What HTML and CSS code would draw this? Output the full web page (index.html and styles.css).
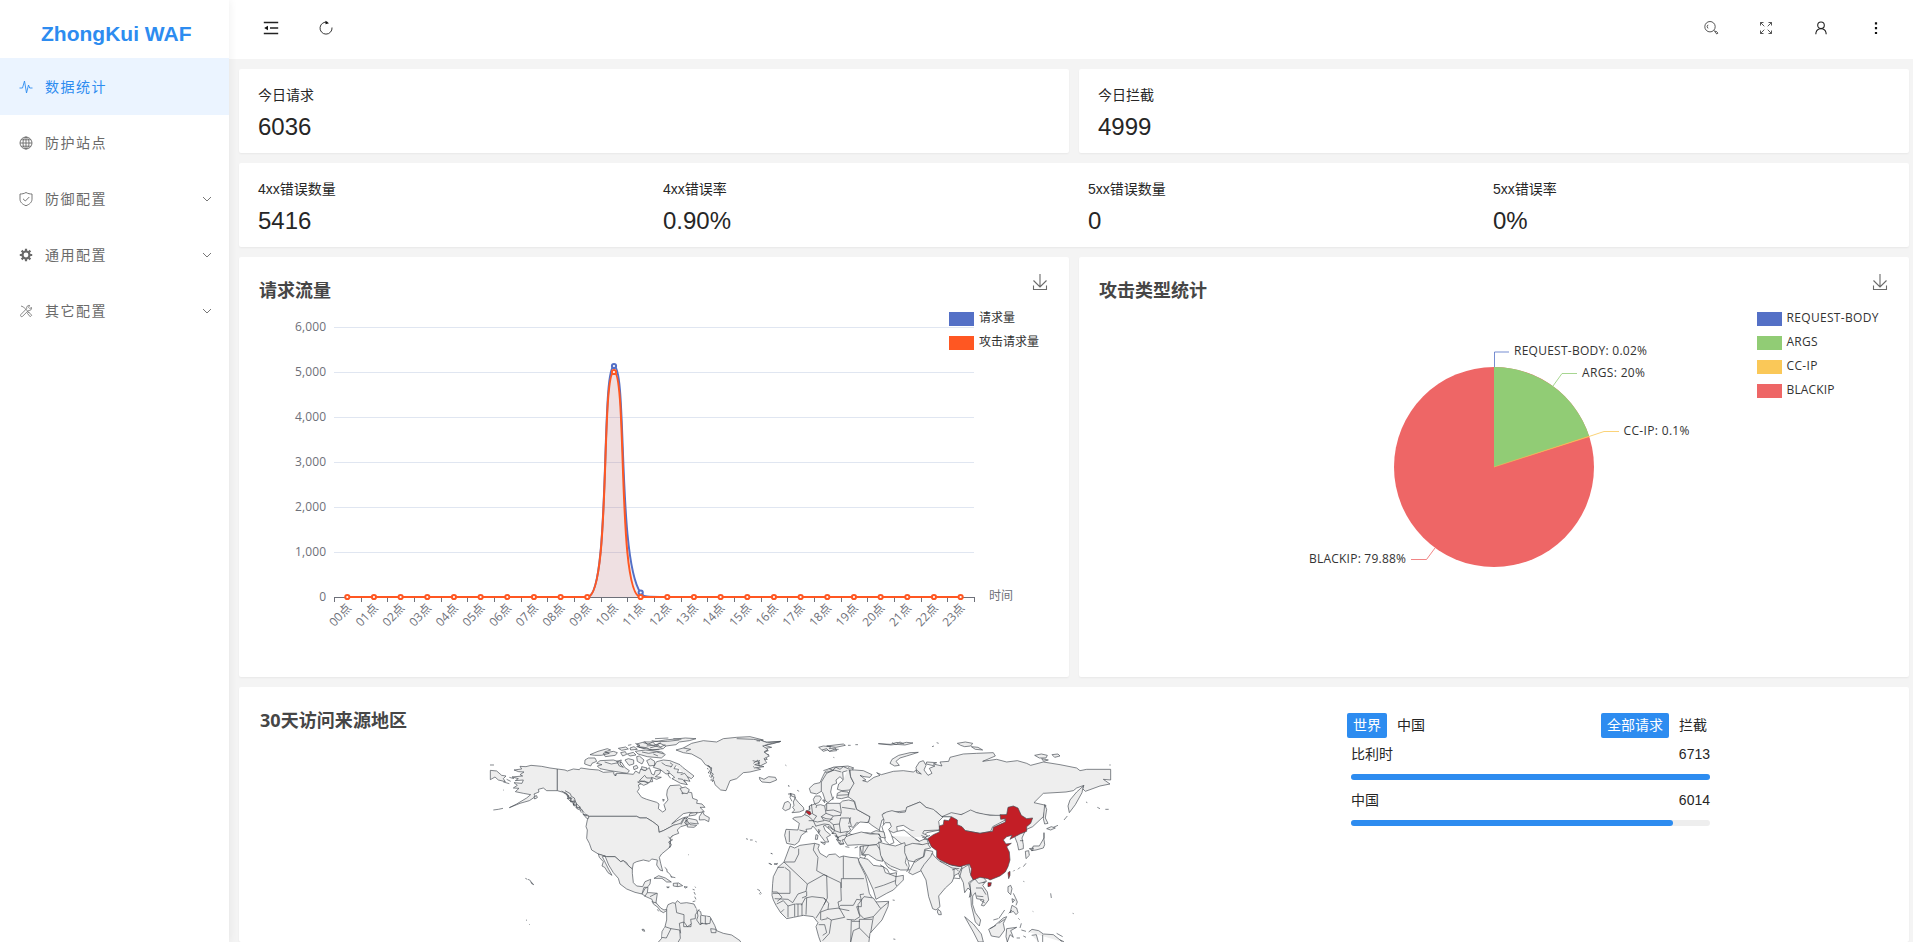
FILE: index.html
```html
<!DOCTYPE html>
<html lang="zh-CN">
<head>
<meta charset="utf-8">
<title>ZhongKui WAF</title>
<link rel="stylesheet" href="styles.css">
</head>
<body>
<div class="app">
  <aside class="sidebar">
    <div class="logo">ZhongKui WAF</div>
    <nav class="menu">
      <a class="menu-item active"><svg class="mi" viewBox="0 0 14 14"><path d="M0.5 8h3L5.500 1l2 12 2-8 1.200 3h2.800"/></svg><span>数据统计</span></a>
      <a class="menu-item"><svg class="mi" viewBox="0 0 14 14"><circle cx="7" cy="7" r="6"/><ellipse cx="7" cy="7" rx="3" ry="6"/><path d="M7 1v12M1 7h12M2 3.800h10M2 10.200h10"/></svg><span>防护站点</span></a>
      <a class="menu-item"><svg class="mi" viewBox="0 0 14 14"><path d="M7 .5c2 1.200 4 1.500 6 1.500v5.200c0 3-2.500 5.200-6 6.500C3.500 12.400 1 10.200 1 7.200V2c2 0 4-.3 6-1.500zM4 6.800l2.300 2.200 4-4"/></svg><span>防御配置</span><svg class="arrow" viewBox="0 0 10 6"><path d="M1 1l4 4 4-4"/></svg></a>
      <a class="menu-item"><svg class="mi gear" viewBox="0 0 14 14"><circle cx="7" cy="7" r="3.500"/><path d="M7 .8v2.400M7 10.800v2.400M.8 7h2.400M10.800 7h2.400M2.600 2.600l1.700 1.700M9.700 9.700l1.700 1.700M11.400 2.600L9.700 4.300M4.300 9.700l-1.700 1.700"/></svg><span>通用配置</span><svg class="arrow" viewBox="0 0 10 6"><path d="M1 1l4 4 4-4"/></svg></a>
      <a class="menu-item"><svg class="mi tools" viewBox="0 0 14 14"><path d="M2 2l2.500 1L10 8.500M8.500 9.500l1-1.500 3.200 3.200-1.500 1.500zM12.500 3.500L10.700 4.500 9.600 3.300l1-1.900c-2-.2-3.400 1.300-2.900 3.200L2 10.400c-1.300 1.300.3 3.200 1.700 1.800L9.400 6.500c2 .4 3.500-1 3.100-3z"/></svg><span>其它配置</span><svg class="arrow" viewBox="0 0 10 6"><path d="M1 1l4 4 4-4"/></svg></a>
    </nav>
  </aside>

  <div class="page">
    <header class="topbar">
      <div class="tools-left">
        <svg class="hi" viewBox="0 0 16 16"><path class="thick" d="M.8 2.500h14.400M7 8h8.200M.8 13.500h14.400"/><path class="solid" d="M1.200 8L5 5.800v4.400z"/></svg>
        <svg class="hi" viewBox="0 0 16 16"><path class="fine" d="M9.500 2.300A6 6 0 1 0 14 7.500"/><path class="solid" d="M7.500 .8L11 3.200 7.500 4.200z"/></svg>
      </div>
      <div class="tools-right">
        <svg class="hi thin" viewBox="0 0 16 16"><circle cx="7" cy="6.700" r="5.200"/><path d="M5 4.800a2.600 2.600 0 0 0 0 3.600M10.800 10.500l1.600 1.200M11.800 12l1-1 2.200 2.100-1 1z"/></svg>
        <svg class="hi thin" viewBox="0 0 16 16"><path d="M2.500 5.500v-3h3M2.500 2.500l3.800 3.800M10.500 2.500h3v3M13.500 2.500L9.700 6.300M2.500 10.500v3h3M2.500 13.500l3.800-3.800M10.500 13.500h3v-3M13.500 13.500L9.700 9.700"/></svg>
        <svg class="hi" viewBox="0 0 16 16"><circle cx="8" cy="5.300" r="3.300"/><path d="M2.800 14.300c0-3 1.700-5 4-5.600h2.400c2.300.6 4 2.600 4 5.600"/></svg>
        <svg class="hi" viewBox="0 0 16 16"><path class="solid" d="M6.900 2.300h2.200v2.200H6.900zM6.900 7.100h2.200v2.200H6.900zM6.900 11.900h2.200v2.200H6.900z"/></svg>
      </div>
    </header>

    <main class="content">
      <div class="row two">
        <section class="card stats"><div class="stat"><p>今日请求</p><b>6036</b></div></section>
        <section class="card stats"><div class="stat"><p>今日拦截</p><b>4999</b></div></section>
      </div>
      <section class="card stats four">
        <div class="stat"><p>4xx错误数量</p><b>5416</b></div>
        <div class="stat"><p>4xx错误率</p><b>0.90%</b></div>
        <div class="stat"><p>5xx错误数量</p><b>0</b></div>
        <div class="stat"><p>5xx错误率</p><b>0%</b></div>
      </section>

      <div class="row two">
        <section class="card chart">
          <svg class="canvas" id="flow" viewBox="239 257 830 420" width="830" height="420">
            <text class="title" x="259" y="297">请求流量</text>
            <path class="save" d="M1040 274v13M1033.500 280.500l6.500 6.500 6.500-6.500M1033.500 285.500v4h13v-4"/>
            <g class="grid"><path d="M334 327.500h640M334 372.500h640M334 417.500h640M334 462.500h640M334 507.500h640M334 552.500h640"/></g>
            <g class="ylab"><text x="326" y="330.500" textLength="31">6,000</text><text x="326" y="375.500" textLength="31">5,000</text><text x="326" y="420.500" textLength="31">4,000</text><text x="326" y="465.500" textLength="31">3,000</text><text x="326" y="510.500" textLength="31">2,000</text><text x="326" y="555.500" textLength="31">1,000</text><text x="326" y="600.500">0</text></g>
            <g id="axis"></g>
            <text class="axname" x="989" y="600">时间</text>
            <path class="area-b" d="M587.300 597C611 597 600.700 366 614 366C627.300 366 617 559 640.700 593C643.500 597 646 597 667.300 597z"/>
            <path class="area-o" d="M587.300 597C611 597 600.700 372 614 372C627.300 372 617 597 640.700 597z"/>
            <path class="line-b" d="M347.300 597H587.300C611 597 600.700 366 614 366C627.300 366 617 559 640.700 593C643.500 597 646 597 667.300 597H960.700"/>
            <g class="dot-b"><circle cx="614" cy="366" r="2.100"/><circle cx="640.700" cy="592.500" r="2.100"/></g>
            <path class="line-o" d="M347.300 597H587.300C611 597 600.700 372 614 372C627.300 372 617 597 640.700 597H960.700"/>
            <g class="dot-o" id="dots"></g>
            <rect x="949" y="312" width="25" height="14" fill="#5470c6"/><text class="leg" x="979" y="322">请求量</text>
            <rect x="949" y="336" width="25" height="14" fill="#ff5722"/><text class="leg" x="979" y="346">攻击请求量</text>
          </svg>
        </section>
        <section class="card chart">
          <svg class="canvas" viewBox="1079 257 830 420" width="830" height="420">
            <text class="title" x="1099" y="297">攻击类型统计</text>
            <path class="save" d="M1880 274v13M1873.500 280.500l6.500 6.500 6.500-6.500M1873.500 285.500v4h13v-4"/>
            <circle cx="1494" cy="467" r="100" fill="#ee6666"/>
            <path d="M1494 467V367A100 100 0 0 1 1589.100 436.100z" fill="#91cc75"/>
            <path d="M1494 467L1589.100 436.100 1589.300 436.700z" fill="#fac858" stroke="#fac858" stroke-width=".3"/>
            <g class="guide">
              <path stroke="#5470c6" d="M1494.500 367V352H1509"/><path stroke="#91cc75" d="M1553 386L1562 373.500H1577"/><path stroke="#fac858" d="M1589 436.500L1604 431.500H1619"/><path stroke="#ee6666" d="M1435 548L1426.500 559.500H1411"/>
            </g>
            <g class="leg">
              <text x="1514" y="355" textLength="133">REQUEST-BODY: 0.02%</text><text x="1582" y="377" textLength="63">ARGS: 20%</text><text x="1623.500" y="435" textLength="66">CC-IP: 0.1%</text><text x="1309" y="563" textLength="97">BLACKIP: 79.88%</text>
              <rect x="1757" y="312" width="25" height="14" fill="#5470c6"/><text x="1786.500" y="322" textLength="92">REQUEST-BODY</text>
              <rect x="1757" y="336" width="25" height="14" fill="#91cc75"/><text x="1786.500" y="346" textLength="31">ARGS</text>
              <rect x="1757" y="360" width="25" height="14" fill="#fac858"/><text x="1786.500" y="370" textLength="31">CC-IP</text>
              <rect x="1757" y="384" width="25" height="14" fill="#ee6666"/><text x="1786.500" y="394" textLength="48">BLACKIP</text>
            </g>
          </svg>
        </section>
      </div>

      <section class="card region">
        <svg class="map" viewBox="239 687 1108 255" width="1108" height="255">
          <text class="title" x="260" y="726.500" textLength="147">30天访问来源地区</text>
          <!-- western hemisphere -->
          <g class="land" transform="translate(470 720) scale(.33333)">
            <path d="M262 147L240 144 215 139 183 136 168 140 150 139 155 147 132 150 146 155 162 156 150 164 158 168 126 171 145 176 136 182 160 180 156 190 132 188 142 196 130 204 147 205 136 215 160 220 182 224 170 234 140 252 118 263 150 250 178 242 196 230 192 222 207 216 205 208 220 204 230 212 262 212z"/>
            <path d="M61 151L80 153 95 166 108 168 100 176 106 185 85 180 75 171 61 179zM60 135h12M110 178l12 6M118 172l14 4M100 186l18 5M70 270l15-2M85 268l14-3M100 210l2 1M192 230l8-3 2 6-8 4z"/>
            <path d="M262 147L285 150 292 153 310 147 328 149 332 144 360 148 385 150 400 157 430 155 437 168 440 160 470 161 490 163 497 153 508 160 512 147 525 152 538 143 545 162 552 165 556 152 572 150 570 160 556 170 574 172 560 178 545 172 548 185 525 186 505 195 508 205 502 215 515 232 530 238 560 247 567 252 565 266 578 276 587 270 582 254 594 240 590 225 592 210 600 197 628 195 640 206 636 222 650 215 665 218 668 235 682 240 680 250 696 252 705 262 690 262 703 275 675 280 660 277 640 281 620 298 605 312 618 304 640 293 655 290 645 300 632 318 612 315 580 332 567 337 565 318 548 305 530 294 510 294 500 289H358L345 282 335 268 322 262 318 248 308 236 296 228 290 220 262 212z"/>
            <path d="M275 213l14 8 4 9 10 4-2 8 12 4-3 9 10 3 2 9 9 3 3 8M285 212l16 9 3 8 9 5 5 15 7 8 8 6M292 234l8 9 8 4 5 12M280 218l12 6 6 12M296 226l-4 10 12-2-2 12 12-4-4 12 10-2-2 12 12-2M340 283l14 3 6 12-10-3zM328 262l10 12 2 10 12 4"/>
            <path d="M503 186l20-3 12 7-14 6zM508 182l16-16 6 8 16 0-8 14zM630 205l16-4 12 8-6 12-14-2zM578 238l5 1-3 5z"/>
            <path d="M358 289H500L510 294 530 294 548 305 565 318 567 337 580 332 610 316 632 310 640 296 650 294 645 308 650 315 632 320 622 330 626 340 612 345 603 352 607 360 596 366 602 376 597 384 575 402 568 412 572 430 578 453 570 450 560 435 562 420 545 417 538 424 520 420 500 425 490 430 487 447 475 437 470 428 460 422 452 425 435 410 410 410 385 402 365 390 358 370 350 355 352 330 348 320 352 300z"/>
            <path d="M595 350l8 8-4 8 5 8-5 9 3-20M608 346l-8 10 6 6M655 295l25 5 5 12-25-3-8 6-8-6zM650 300l10 14 20 2-8 6-20-1zM688 290l10-15 5 10 15 8-2 12-12-6-16 1zM660 280l22-3-5 8-20 3zM645 292l-12 22"/>
            <path d="M385 402L410 410 435 410 452 425 460 422 475 437 487 447 487 460 490 488 500 498 518 500 525 485 542 478 540 492 532 502 522 502 516 522 495 517 470 507 450 492 445 475 430 458 416 435 405 408 397 410 408 432 416 448 426 466 414 458 404 442 396 438 400 425 388 412z"/>
            <path d="M516 522l10-18 8-2-2 16 8 0 22 2-4 28 14 16 10 6 16-4 4 8-12-2-10 6-10-6-6-10-14-10-4-14-18-8zM532 518l-8 12M540 530l20-10M545 545l15 4M562 568l4 6"/>
            <path d="M552 475l14-8 20 7 18 12-14 0-14-11zM610 490l16-1 12 8-14 3-14-2zM622 490v9M590 501l8 0-4 3zM642 500l10 1-6 3zM584 442l6 5 2 10M592 455l8 8 6 10M602 470l14 3M668 508l6 2M672 516l4 8M674 530l4 8M668 545l8-2M675 500l2 3"/>
            <path d="M590 565L594 554 608 548 616 550 622 542 632 550 650 548 672 552 680 568 692 575 694 586 720 590 734 616 740 632 760 640 785 645 810 662 815 672H560L575 655 576 635 585 620 590 600z"/>
            <path d="M616 550l4 28 22 6 0 22 10 14 12-8-2-14 14-2 0-12 12-16M680 568l4 20-4 12 10 14 6-6M692 586l0 24 20 2M706 588l0 24 14-2 2-16M585 620l18 6-14 28-14-2M603 626l26 4 2 25-10 17M663 612l0 8-22 0 0-14-13 4 4 30M690 614l8-4M722 626l16 2 0 10-14 0z"/>
            <path d="M345 120l10-6 20 0 5 10-14 6-4 8-18-6zM380 130l10-8 40-2 26 8 8 14 14 10-6 8-26-4-26-4-30-6-8-8 14-4zM360 104l24-10 28-8 10 4-18 6 14 4-24 6-20 0zM400 100l30-6 12 4-6 8-30 4zM440 124l14-4-4 12 10 10-12-4zM445 85l22-4 8 6-20 4zM465 120l10-4 16 4 0 12-14 4zM480 84l12-4 10 8-20 2zM496 94l30-4 50 6 10 8-12 10-42-4-28-8zM500 110l8-2 14 12-6 12-14-8zM472 102l18-5 8 8-18 3zM490 140l10-4 4 8-12 5zM452 98l14-3 4 8-12 5zM474 76l10-2M430 160l6 8 2-8M404 126l20 6 22-4"/>
            <path d="M500 72l22-6 24 0 40-6 60-6 32 2-20 6-30 4-10 8-30 4-8 8-32 4-40-8zM520 68l30 8 20-6 18 8M530 78l20-2 20 6 16-8M505 80l25 3 10 6 28 0M545 62l20 3 28-1 35-4M540 84l26-8 10 10M555 56l40-2M610 56l24 2M496 70l14 6-10 4 24 6M524 64l8 10 16-8 10 10 14-8M516 96l20 4 24-4 22 6M550 102l14 6"/>
            <path d="M560 125l20-5 20 2 30 12 8 8 34 26-8 8-12-6 8 14-18-4 10 14-20-4-26-14 8-4-14-12-12 2-18-14-20-6zM530 122l12-6 12 8 0 12-16 2zM590 150l8 5-4 10 8 10M575 128l12 8 18 4M600 128l8 6-6 8M515 140l16 4-4 8-12-4zM618 136l-6 10 14 2-4 10 16 0M632 164l12-4 8 10M624 176l14 2 8 10"/>
            <path d="M618 90L640 84 665 70 700 62 740 66 760 56 800 52 840 50 880 60 860 62 890 66 933 64 905 72 885 76 905 82 880 86 895 92 876 98 896 104 882 108 892 118 868 122 884 130 850 140 872 148 840 156 820 158 800 176 780 182 768 212 752 210 735 194 732 182 722 180 730 172 718 168 728 162 714 158 724 152 712 146 720 140 706 134 694 118 665 102 640 98z"/>
            <path d="M848 122l26 6-20 6 28 6-30 4M875 84l14 8-8 12 12 6M715 136l10 14-4 12 10 10-4 14M800 56l50 2 30 4M640 84l22 4-14 6M850 130l14-10 4 18 10-8M712 138l14 6-8 10 12 8-8 12"/>
            <path d="M868 172l14 6 14-8 20 2 4 8-20 8-24-2-6-6zM946 135l3 2M984 212l2 2M955 197l3 1M828 356l6 2M840 360l8 0M856 364l4 2M902 400l4 1M898 430l6 3M912 432l10 2M862 508l8 4M868 520l3 4M655 404l2 1M166 475l6 3M174 478l8 4M182 484l9 10-6-3zM168 600l3 1M177 612l2 2M516 628l6 0 2 6-6-2z"/>
          </g>
          <!-- eastern hemisphere -->
          <g class="land" transform="translate(760 720) scale(.33333)">
            <path d="M0 60L22 68 60 65 28 72 8 78 24 88 12 96 28 108 12 116 20 128 0 138M84 197l4 2M112 211l4 2"/>
            <path d="M176 82l14-4 22 2-4 6 18-2 4 8-20 2-8-4-12 4zM200 78l50-6 6 4-28 6zM264 76l8 0M286 74l8 0M355 71l36 2 20-6 12 4 16-4 20 2-24 6-28-2-14 2zM220 112l3 1M516 80l6-2M530 68l6 2M186 90l14-4 8 8 14-6 14 0M396 68l12 6 12-8 12 6"/>
            <path d="M390 130L396 118 416 106 450 98 475 97 440 108 420 114 408 124 418 136 404 138zM592 70l24-4 22 4-6 8-18 2-12-4zM634 80l20 2 14 8-22-2zM824 106l20-4 18 4-4 8-20 0zM876 104l18-2 6 6-16 4zM845 116l20 4-14 4zM1048 135h4"/>
            <path d="M100 246l6-14-12-4-4-8 14 4 2 12 10 12 14 14 2 8-14 6-22 2 8-8-6-8 4-6zM68 266l6-18 10-4 8 8-2 14-14 6zM84 222l10 0-4 10 6 12"/>
            <path d="M104 292L124 290 134 284 138 274 150 268 148 258 164 252 170 256 182 254 194 258 200 250 240 250 248 243 266 240 282 244 290 268 322 286 330 290 326 306 306 312 290 308 280 322 266 318 272 330 258 340 262 356 246 360 252 372 240 374 230 358 236 350 222 342 208 328 202 314 190 318 196 332 212 345 200 352 206 366 196 366 184 350 166 326 158 318 154 326 138 328 140 334 124 346 116 366 104 375 80 370 74 346 78 328 114 330 118 310 98 296z"/>
            <path d="M88 332v34M118 330l24 6M154 252l4 30 12 6-10 14 8 18M134 284l10 4 14 12M148 258l0 10M170 256l-2 8M194 258l4 22 -14 10 8 12-20 4-14-4M198 280l22 8 22-2M200 250l0 20M240 250l4 28-4 10M246 262l40 6M220 288l-12 16 12 10 18-2 4-18 26 0 6 24M208 304l-16-4M220 314l4 18 18 6 22-4M192 312l16 2 12 16M238 312l4 26M204 318l20 14-8 10M224 346l10 6 14-6 12 0M215 340l12 0 10 22M168 318l24-6M272 292l-6 20M242 278l-22-8-22 2M184 290l14 6 20 2M160 302l-14 0M226 350l10 2-6 8 12 2-4 8 14 0M196 318l16 12 8 12"/>
            <path d="M148 205L162 192 180 188 188 170 196 154 220 142 250 140 280 146 276 152 262 152 248 156 250 180 240 170 228 180 230 190 216 196 212 216 218 236 204 248 196 242 188 218 184 214 170 222 152 218zM160 238l6-10 14 0 4 8-8 12-12 4zM188 240l6 0 0 8zM218 240l3-10"/>
            <path d="M184 214V186L200 160 222 150 244 156M190 152l30-10 44-4 18 6M196 158l26-8M206 146l12 4 10-8 12 6 10-8 14 6M250 180l-14 12-4 16 14 4 24-2 14-16-12-22-6-30M232 220l12-6 20 2 4 14-24 6-14-2zM232 226l36-2M266 218l6-8"/>
            <path d="M284 150L310 152 336 164 330 172 312 170 300 166 318 180 308 182 322 186 342 172 360 166 350 158 364 164 400 154 430 152 460 156 470 150 484 162 470 158 468 142 478 126 490 122 498 136 492 150 504 166 516 160 508 145 525 138 498 132 500 126 530 128 520 132 546 138 540 126 566 124 570 112 610 102 650 100 700 98 706 108 668 124 710 118 740 126 772 122 800 130 812 136 850 126 900 134 950 144 960 152 980 148 1052 148V180L1030 178 1050 192 1020 198 976 214 968 206 972 196 950 204 940 212 918 216 850 220 822 248 858 256 850 290 818 320 796 330 772 300 756 280 726 288 700 286 672 284 640 276 600 284 574 290 546 290 530 276 518 270 498 262 480 246 440 262 440 272 370 280 380 296 366 300 356 336 324 330 306 312 326 306 330 290 290 268 284 244 264 230 270 210 282 190 272 170 270 150z"/>
            <path d="M930 240l20-24 20-18-4 20-20 36-18 24-4-20zM854 254l6 14-4 26 8 16-10 2-4-16zM978 246l4 2M1012 262l8 4M1036 268l10 0M912 300l10-12M880 322l14-6"/>
            <path d="M366 284L380 276 396 272 418 278 436 276 440 262 480 246 498 262 520 268 548 292 536 304 538 318 540 330 500 338 488 352 470 336 452 330 430 316 410 320 412 334 400 338 384 330 370 312 372 300z"/>
            <path d="M546 290L574 278 604 284 632 270 650 278 690 286 724 286 736 300 698 320 692 334 660 340 616 332 590 320 572 290z"/>
            <path d="M412 334l20-4 22 18 24 16 14-6 10-12-14-6 4-8 48-2M488 352l12 4 6 16-16 4-12-4-18 2-22 8-18-14-16-14-10-6M478 364l-12-6M492 358l22 0M484 346l12 6 14-6"/>
            <path class="sea" d="M376 308l14 0 4 12-8 8 8 16 8 24-14 6-12-12-4-20-6-22z"/>
            <path class="sea" d="M284 320l16-14 26 2 10 8 24 16-10 10-30-4-34 6-22 0 10-12z"/>
            <path d="M258 350l16-6 30-8 26 6 28 0 6 22-16 10-20 2-30-2-36 2-10-16zM258 346l8-6 10 4M334 338l14-6 24 4 4 18-12-2-10-10M356 352l10 14"/>
            <path d="M300 380l10-2 40-4 12 18 6 32-18-4-24-16-20 0zM300 380v30M310 378l-2 24M318 406l-12 22M326 376l-16 26M304 404l14 4"/>
            <path d="M356 366l20 6 30 6 28-10 8 30-6 30 12 22-26 0-30-12-20-14-10-18z"/>
            <path d="M434 378l24-8 30 4 14-4 10 14-18 4-4 22-24 16-22-4-10-24zM440 456l8-18-4-14M466 420l26-10 4-20 22 4 0 22-14 20-16 14-30 14-12-6z"/>
            <path d="M482 450L492 434 512 410 516 400 530 416 540 424 576 436 606 440 600 458 584 466 576 486 556 504 536 528 540 560 528 570 518 566 506 530 498 480z"/>
            <path d="M540 424l36 20 22 2M582 446l0 24M606 442l-10 18 4 14M576 450l12-4 8 8M580 474l20 2M534 568l8 6 2 10-8 0-4-8z"/>
            <path d="M606 446l20-12 4 24 10 20-14 10 4 14 4 24-6 6 4-20-8-8-10 14-4-30-10-20zM630 490l14-14 12 14 20-4-8 10 14 20 4 24-14 18-8-2 8-16-22-4-4-18-8 10 0 26 8 24 16 22-4 18-12-12-12-50zM648 504l18 0 12 20M650 528l20 2M640 478l14-10 16 4 10 12-12 4M660 540l14 8"/>
            <path d="M614 590L640 612 664 642 670 666H655L640 636zM686 628l14-8 30-26 10-4-10 20 4 20-16 22-24-4zM690 626l18-10M716 610l18-12M740 626l30-4-18 10 8 20-10-8-8 22-4-16zM700 600l14-4M744 500l8-4 4 10-4 18-8-8zM756 536l8 4-6 8zM756 556l14 8 4 14-6 6-8-10-10 4zM734 570l-18 26M760 520l6 12 6 14-4 10M775 595l4 4M784 610l-4 14M784 630l14 4M806 636l10-8 20 4 14 10 30 2 28 22M815 646l14-2 6 22M848 644v22M746 580l10-10M790 648l8 4M770 654l10 0M890 640l18 10M900 660l12 5"/>
            <path d="M860 326l14-6 12 4-14 6zM852 338l0 20 2 16-4 10-22 6-14 2 6-14 18 0 14-24zM796 394l10-2 2 14-10 10zM808 386l12-2-2 8zM764 350l6-8 12-4 14-6-10 22 4 20 0 12-14 4-4-20-8-20zM780 362l10 0M798 430l-8 10M780 442l-6 6M764 450l-4 4M790 484l3 1M872 520l2 14M818 574l2 1M938 580l3 1M398 540l6 1M400 657l6 1M34 400l4 2M26 430l10 4M42 432l12-2M0 515l4 6"/>
            <path d="M294 420L300 412 324 418 340 436 370 440 376 458 388 462 410 458 408 470 430 466 430 480 400 510 380 520 348 538 340 510 322 470 308 444zM360 434l22 14 6 12M344 504l26-8 36-14M388 462l20 8-2 20 4 8M374 428l10 14 14 8 14 4"/>
            <path d="M54 442L72 426 90 378 104 384 120 376 164 370 178 374 174 386 180 400 200 412 206 404 226 402 238 412 250 408 270 412 294 414 298 430 316 466 322 490 328 520 344 546 386 544 384 560 366 600 330 640 326 672H184L176 650 168 620 174 608 160 590 130 586 100 592 80 596 62 578 48 556 40 540 36 526 38 490 40 470z"/>
            <path d="M72 426h32l12-24 0-16M72 442h-20M72 426l70 66 50-28 50 24M90 454v66H38M90 454l-16-12M164 370l-4 20 14 22-4 40 22 12 10 4M250 408V476H312M250 476h-6v28M142 492l-4 22-24 8-16 26-14-10-40-2M36 516l16 0 14 16-14 12M50 552l20-10 14 16 0 34M62 578l10-10M84 558l20-6 0 38M106 552h20v36M114 552v36M126 534l14-6 0-14M124 556l12-22 20-4 36 4 6 8-18 34-12 18M140 534l-2 50M200 468l2 66-10 20M242 488l2 54-10 4 4 20 30 6M192 534l14 16-2 18-22 8 0 24M204 568l34-4 16 28-40 8-14-8M238 560l4-4 38 0 10-18 14 2 0 20-14 0 10 30-16 10-24-2M312 530l28 4 22 32-22 24-28 6-14-14-4-28zM304 540l-4-16 12-2M362 566l24-20M340 590l-8 48M298 598l0 26-18 8-8 34M274 600l-2 66M298 598l38 0M214 600l-6 40-20 22M176 614l18 0 6 24-12 8M184 600l18-4M276 604l24 0M298 624l30 30"/>
            <path d="M176 328l4 4-4 8zM168 344l6 2-2 12-6 0zM182 366l14 2-2 6zM256 380l12 2M284 384l10-4"/>
            <path class="hot" d="M138 272l12 2 4 8-6 3-10-8z"/>
            <path class="hot" d="M503 356L520 344 538 336 538 318 550 314 552 300 566 302 574 290 592 300 592 314 606 320 616 332 660 340 698 334 700 322 736 306 736 296 722 298 720 284 740 284 744 262 760 258 774 264 784 286 800 296 818 294 812 310 800 320 800 334 780 342 750 358 756 346 740 350 730 360 738 372 754 370 740 380 748 396 750 420 744 440 736 456 720 468 690 480 684 476 660 472 640 480 632 466 634 446 628 432 600 440 570 434 540 420 530 412 530 392 514 380z"/>
            <path class="hot" d="M684 488l10 0-2 10-8 2zM744 458l6-4 0 12-4 10z"/>
          </g>
        </svg>
        <div class="ranking">
          <div class="filters">
            <div class="tabs"><span class="tab on">世界</span><span class="tab">中国</span></div>
            <div class="tabs"><span class="tab on">全部请求</span><span class="tab">拦截</span></div>
          </div>
          <div class="rank"><div class="rank-head"><span>比利时</span><span>6713</span></div><div class="bar"><i style="width:100%"></i></div></div>
          <div class="rank"><div class="rank-head"><span>中国</span><span>6014</span></div><div class="bar"><i style="width:89.6%"></i></div></div>
        </div>
      </section>
    </main>
  </div>
</div>
<script src="chart.js"></script>
</body>
</html>
```
FILE: styles.css
```css
* { box-sizing: border-box; }
body { margin: 0; height: 942px; overflow: hidden; background: #f4f4f4; font: 14px "Liberation Sans", "Noto Sans CJK SC", sans-serif; color: #262626; }
p { margin: 0; }
.app { display: flex; height: 942px; }
.sidebar { width: 229px; flex: none; background: #fff; box-shadow: 1px 0 8px rgba(0,0,0,.06); z-index: 2; }
.logo { height: 58px; padding-top: 8px; line-height: 51px; padding-left: 41px; font-size: 21px; font-weight: bold; color: #2d8cf0; white-space: nowrap; }
.menu-item { display: flex; align-items: center; height: 56px; padding: 0 17px 0 19px; color: #6a6a6a; letter-spacing: 1.5px; }
.menu-item span { margin-left: 12px; flex: 1; line-height: 20px; }
.menu-item.active { height: 57px; background: #ebf4ff; color: #2d8cf0; }
.mi { width: 14px; height: 14px; fill: none; stroke: currentColor; stroke-width: .9; }
.gear { stroke-width: 2.2; }
.tools { stroke-width: .8; }
.arrow { width: 10px; height: 6px; fill: none; stroke: #777; stroke-width: 1; }
.page { flex: 1; min-width: 0; display: flex; flex-direction: column; }
.topbar { height: 59px; flex: none; background: #fff; display: flex; justify-content: space-between; padding: 20px 29px 0 34px; }
.tools-left, .tools-right { display: flex; gap: 39px; }
.hi { width: 16px; height: 16px; fill: none; stroke: #222; stroke-width: 1.1; }
.hi .thick { stroke-width: 1.6; }
.hi .fine { stroke-width: .9; }
.hi .solid { fill: #111; stroke: none; }
.thin { stroke: #444; stroke-width: .9; }
.content { padding: 10px 4px 0 10px; display: flex; flex-direction: column; gap: 10px; }
.row.two { display: grid; grid-template-columns: 830px 830px; gap: 10px; }
.card { background: #fff; border-radius: 2px; box-shadow: 0 1px 2px rgba(0,0,0,.05); }
.stats { height: 84px; padding: 16px 0 0 19px; }
.stats.four { display: grid; grid-template-columns: 405px 425px 405px 1fr; }
.stat p { line-height: 20px; height: 20px; }
.stat b { display: block; font-weight: normal; font-size: 24px; line-height: 28px; margin-top: 8px; }
.chart { height: 420px; }
.canvas, .map { display: block; }
.canvas text, .map text { font-family: "Open Sans", "Noto Sans CJK SC", sans-serif; font-size: 12px; }
.canvas .title, .map .title { font-size: 18px; font-weight: bold; fill: #464646; }
.save { fill: none; stroke: #6a6a6a; stroke-width: 1.1; }
.grid path { stroke: #e0e6f1; }
.ylab text { text-anchor: end; fill: #6e7079; }
.tick { stroke: #6e7079; }
.canvas .xlab { text-anchor: end; fill: #6e7079; }
.axname { fill: #6e7079; }
.leg { fill: #333; }
.guide path { fill: none; opacity: .8; }
.area-b { fill: #5470c6; opacity: .1; }
.area-o { fill: #ff5722; opacity: .1; }
.line-b, .line-o { fill: none; stroke: #5470c6; stroke-width: 2; }
.line-o { stroke: #ff5722; }
.dot-b circle, .dot-o circle { fill: #fff; stroke: #5470c6; stroke-width: 2; }
.dot-o circle { stroke: #ff5722; }
.region { height: 255px; display: flex; }
.land path { fill: #eee; stroke: #464b53; stroke-width: 2; stroke-linejoin: round; }
.land .sea { fill: #fff; }
.land .hot { fill: #c31e26; }
.ranking { width: 363px; padding-top: 26px; }
.filters { display: flex; justify-content: space-between; margin-right: -3px; }
.tabs { display: flex; gap: 4px; }
.tab { height: 25px; line-height: 25px; padding: 0 6px; border-radius: 2px; }
.tab.on { background: #2d8cf0; color: #fff; }
.rank { margin-left: 4px; height: 46px; }
.rank-head { display: flex; justify-content: space-between; height: 36px; line-height: 32px; }
.bar { height: 6px; border-radius: 3px; background: #eee; }
.bar i { display: block; height: 6px; border-radius: 3px; background: #2d8cf0; }
.menu-item .arrow { margin-right: 0; position: relative; left: 0; }
.menu-item:has(.arrow) { padding-right: 17px; }
.menu-item .arrow { margin-right: 0; }
.sidebar .menu-item { padding-right: 17px; }
```
FILE: chart.js
```js
// Hour ticks, labels and zero-line markers of the traffic chart
var axis = '<path class="tick" d="M334 597.5H974.5"/>', dots = '';
for (var i = 0; i <= 24; i++) {
  var t = Math.round(334 + i * 26.667) + 0.5;
  axis += '<path class="tick" d="M' + t + ' 597v5"/>';
  if (i === 24) break;
  var x = 347.3 + i * 26.667;
  axis += '<text class="xlab" transform="translate(' + (x + 1) + ' 605) rotate(-47)" y="5">' + String(i).padStart(2, '0') + '点</text>';
  dots += '<circle cx="' + x + '" cy="' + (i === 10 ? 372 : 597) + '" r="2.1"/>';
}
document.getElementById('axis').innerHTML = axis;
document.getElementById('dots').innerHTML = dots;
```
